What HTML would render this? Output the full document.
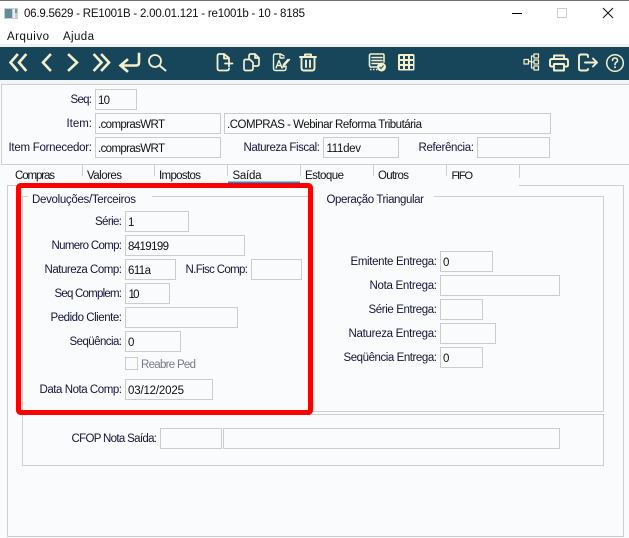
<!DOCTYPE html>
<html>
<head>
<meta charset="utf-8">
<style>
html,body{margin:0;padding:0;background:#fff;width:629px;height:538px;overflow:hidden}
svg{display:block}
text{font-family:"Liberation Sans",sans-serif;font-size:11.5px;fill:#15153a}
.v{fill:#111}
.b{fill:none;stroke:#cfcfcf;stroke-width:1}
.i{fill:#fafbfd;stroke:#cccccc;stroke-width:1}
.t{fill:#111}
.ic{fill:none;stroke:#f5f0cb;stroke-width:1.7;stroke-linecap:round;stroke-linejoin:round}
.ch{fill:none;stroke:#f5f0cb;stroke-width:2.6;stroke-linecap:square;stroke-linejoin:miter}
</style>
</head>
<body>
<svg width="629" height="538" viewBox="0 0 629 538" xmlns="http://www.w3.org/2000/svg">
<!-- window chrome -->
<rect width="629" height="538" fill="#fff"/>
<rect width="629" height="1" fill="#6f6f6f"/>
<rect x="4" y="8" width="14" height="11" fill="#c9ccd0"/>
<rect x="5" y="9" width="7" height="9" fill="#5f8f9a"/>
<rect x="13" y="9" width="2" height="9" fill="#e8ecee"/>
<rect x="15" y="9" width="2" height="4" fill="#7a9aa8"/>
<text x="24" y="17" textLength="281" lengthAdjust="spacing" style="fill:#111">06.9.5629 - RE1001B - 2.00.01.121 - re1001b - 10 - 8185</text>
<rect x="512" y="13" width="10" height="1" fill="#000"/>
<rect x="557.5" y="8.5" width="9" height="9" fill="none" stroke="#cfcfcf"/>
<path d="M603 8L613 18M613 8L603 18" stroke="#111" stroke-width="1" fill="none"/>
<text x="7" y="40" textLength="42" lengthAdjust="spacing" style="fill:#111">Arquivo</text>
<text x="63" y="40" textLength="31" lengthAdjust="spacing" style="fill:#111">Ajuda</text>
<rect y="44" width="629" height="3" fill="#f0f0f0"/>
<!-- toolbar -->
<rect y="47" width="629" height="33" fill="#17465b"/>
<rect y="80" width="629" height="4" fill="#f4f4f4"/>
<path class="ch" d="M17 55L10.5 62.5L17 70M25.5 55L19 62.5L25.5 70"/>
<path class="ch" d="M50 55L43 62.5L50 70"/>
<path class="ch" d="M69 55L77 62.5L69 70"/>
<path class="ch" d="M94.500 55L101.500 62.500L94.500 70M102 55L109 62.500L102 70"/>
<path class="ch" d="M139 54V62.500Q139 65.500 136 65.500H122M127 60L120.500 65.500L127 71"/>
<circle class="ic" cx="155" cy="61" r="6" style="stroke-width:1.8"/>
<path class="ic" d="M159.500 65.500L165.500 70.500" style="stroke-width:2"/>
<!-- new doc -->
<path class="ic" d="M229 60V58L224 54H219.500Q217.500 54 217.500 56V68Q217.500 70.500 219.500 70.500H226.500Q229 70.500 229 68.500M224 54V58.500H229M225 63.500H232.500M229 60.500V66.500" style="stroke-width:1.8"/>
<!-- copy -->
<path class="ic" d="M250 59.500H245.500Q244 59.500 244 61.500V68.500Q244 70.500 245.500 70.500H251Q253 70.500 253 68.500V62.500ZM249 59V56Q249 54 251 54H255L259 58V64Q259 66 257 66H253.500M255 54V58H259" style="stroke-width:1.7"/>
<!-- edit doc -->
<path class="ic" d="M284 56L280.500 54H275.500Q273.500 54 273.500 56V68.500Q273.500 70.500 275.500 70.500H284Q286 70.500 286 68.500V66M280 54V58H284M276 68L279 60.500L282 68M277 65.500H281M283.500 66L289.500 59.500M285.500 66.500L283 67L283.500 64.500L288 59.500" style="stroke-width:1.4"/>
<!-- trash -->
<path class="ic" d="M300 57H316M305 57V54.500H311V57M301.500 57V68Q301.500 70.500 304 70.500H312Q314.500 70.500 314.500 68V57M306 60.500V67M310 60.500V67" style="stroke-width:1.9"/>
<!-- report -->
<path class="ic" d="M382 67H371Q369.500 67 369.500 65V55.500Q369.500 54 371 54H383Q384 54 384 55.500V62M372 57.500H382M372 60.500H382M372 63.500H379" style="stroke-width:1.6"/>
<path d="M370 69.500H378" stroke="#f5f0cb" stroke-width="1.500" stroke-dasharray="1.500 1.500"/>
<circle cx="381.500" cy="67" r="4.500" fill="#f5f0cb"/>
<path d="M379.500 67L381 68.500L383.500 65.500" stroke="#17465b" stroke-width="1" fill="none"/>
<!-- grid -->
<rect x="398" y="54" width="16.500" height="16.500" rx="1.500" fill="#f5f0cb"/>
<g fill="#17465b">
<rect x="400" y="56" width="3" height="3"/><rect x="405" y="56" width="3" height="3"/><rect x="410" y="56" width="3" height="3"/>
<rect x="400" y="61" width="3" height="3"/><rect x="405" y="61" width="3" height="3"/><rect x="410" y="61" width="3" height="3"/>
<rect x="400" y="66" width="3" height="3"/><rect x="405" y="66" width="3" height="3"/><rect x="410" y="66" width="3" height="3"/>
</g>
<!-- tree -->
<g class="ic" style="stroke-width:1.2">
<rect x="524" y="59.500" width="4.500" height="4.500"/>
<rect x="534" y="54" width="4.500" height="4"/>
<rect x="534" y="60" width="4.500" height="4"/>
<rect x="534" y="66" width="4.500" height="4"/>
<path d="M528.500 61.500H531.500M531.500 56H534M531.500 56V68H534M531.500 62H534"/>
</g>
<!-- printer -->
<path class="ic" d="M554 59V55.500H564V59M553.500 66.500H551.500Q550 66.500 550 65V61Q550 59 552 59H566Q568 59 568 61V65Q568 66.500 566.500 66.500H564.500M554 64H564V70.500H554Z" style="stroke-width:1.900"/>
<!-- exit -->
<path class="ic" d="M588 57V56Q588 54.500 586 54.500H581Q579 54.500 579 56.500V68.500Q579 70.500 581 70.500H586Q588 70.500 588 69M585 62.500H597M593 58.500L597 62.500L593 66.500" style="stroke-width:1.900"/>
<!-- help -->
<circle class="ic" cx="615" cy="63" r="8.300" style="stroke-width:1.500"/>
<path class="ic" d="M612.500 60.500Q612.500 58 615 58Q617.500 58 617.500 60.500Q617.500 61.800 615.800 62.700Q615 63.200 615 64.800" style="stroke-width:1.500"/>
<circle cx="615" cy="67.300" r="1" fill="#f5f0cb"/>

<!-- body -->
<rect x="0" y="84" width="629" height="454" fill="#fafbfd"/>
<path class="b" d="M629 84.500H1.500V164.500H629"/>
<!-- tabs -->
<rect x="8" y="165" width="511" height="21" fill="#fafbfd"/>
<path class="b" d="M82.500 164V176M154.500 164V176M227.500 164V176M300.500 164V176M373.500 164V176M446.500 164V176M519.500 164V178"/>
<rect x="228" y="181.500" width="72" height="1.500" fill="#1295dc"/>
<text class="t" x="15" y="179" textLength="40" lengthAdjust="spacing">Compras</text>
<text class="t" x="87" y="179" textLength="35" lengthAdjust="spacing">Valores</text>
<text class="t" x="159" y="179" textLength="42" lengthAdjust="spacing">Impostos</text>
<text class="t" x="232.500" y="179" textLength="29" lengthAdjust="spacing">Saída</text>
<text class="t" x="305" y="179" textLength="39" lengthAdjust="spacing">Estoque</text>
<text class="t" x="378" y="179" textLength="31" lengthAdjust="spacing">Outros</text>
<text class="t" x="451.500" y="179" textLength="21.500" lengthAdjust="spacing" style="font-size:11px">FIFO</text>
<path class="b" d="M519 185.500H623.500V536.500H7.500V185.500H17"/>
<!-- groups -->
<path class="b" d="M28 196.500H22.500V412M152 196.500H309"/>
<path class="b" d="M434 196.500H603.500V411.500H313"/>
<rect class="b" x="22.500" y="414.500" width="581" height="51"/>
<text x="32" y="203" textLength="104" lengthAdjust="spacing">Devoluções/Terceiros</text>
<text x="326.500" y="203" textLength="97.500" lengthAdjust="spacing">Operação Triangular</text>

<!-- header fields -->
<text x="70.500" y="103" textLength="21.500" lengthAdjust="spacing">Seq:</text>
<rect class="i" x="95.500" y="89.500" width="41" height="20"/>
<text class="v" x="98" y="104" textLength="12" lengthAdjust="spacing">10</text>
<text x="66.500" y="127" textLength="25.500" lengthAdjust="spacing">Item:</text>
<rect class="i" x="95.500" y="113.500" width="125" height="20"/>
<text class="v" x="98" y="128" textLength="67" lengthAdjust="spacing">.comprasWRT</text>
<rect class="i" x="224.500" y="113.500" width="326" height="20"/>
<text class="v" x="227" y="128" textLength="195" lengthAdjust="spacing">.COMPRAS - Webinar Reforma Tributária</text>
<text x="8.500" y="151" textLength="83.500" lengthAdjust="spacing">Item Fornecedor:</text>
<rect class="i" x="95.500" y="137.500" width="125" height="20"/>
<text class="v" x="98" y="152" textLength="67" lengthAdjust="spacing">.comprasWRT</text>
<text x="243.500" y="151" textLength="76.500" lengthAdjust="spacing">Natureza Fiscal:</text>
<rect class="i" x="323.500" y="137.500" width="75" height="20"/>
<text class="v" x="326.500" y="152" textLength="34.500" lengthAdjust="spacing">111dev</text>
<text x="418.500" y="151" textLength="55.500" lengthAdjust="spacing">Referência:</text>
<rect class="i" x="477.500" y="137.500" width="72" height="20"/>

<!-- left fields -->
<text x="95" y="225" textLength="27" lengthAdjust="spacing">Série:</text>
<rect class="i" x="125.500" y="211.500" width="63" height="20"/>
<text class="v" x="128" y="226" textLength="5" lengthAdjust="spacing">1</text>
<text x="51.500" y="249" textLength="70.500" lengthAdjust="spacing">Numero Comp:</text>
<rect class="i" x="125.500" y="235.500" width="119" height="20"/>
<text class="v" x="128" y="250" textLength="41" lengthAdjust="spacing">8419199</text>
<text x="44.500" y="273" textLength="77.500" lengthAdjust="spacing">Natureza Comp:</text>
<rect class="i" x="125.500" y="259.500" width="50" height="20"/>
<text class="v" x="128" y="274" textLength="23" lengthAdjust="spacing">611a</text>
<text x="185.500" y="273" textLength="62.500" lengthAdjust="spacing">N.Fisc Comp:</text>
<rect class="i" x="251.500" y="259.500" width="50" height="20"/>
<text x="54.500" y="297" textLength="67.500" lengthAdjust="spacing">Seq Complem:</text>
<rect class="i" x="125.500" y="283.500" width="44" height="20"/>
<text class="v" x="128.500" y="298" textLength="11" lengthAdjust="spacing">10</text>
<text x="50.500" y="321" textLength="71.500" lengthAdjust="spacing">Pedido Cliente:</text>
<rect class="i" x="125.500" y="307.500" width="112" height="20"/>
<text x="69.500" y="345" textLength="52.500" lengthAdjust="spacing">Seqüência:</text>
<rect class="i" x="125.500" y="331.500" width="55" height="20"/>
<text class="v" x="128" y="346" textLength="5.500" lengthAdjust="spacing">0</text>
<rect class="i" x="125.500" y="357.500" width="12" height="12"/>
<text x="141" y="368" textLength="55" lengthAdjust="spacing" style="fill:#7a7a86">Reabre Ped</text>
<text x="39.500" y="393" textLength="82.500" lengthAdjust="spacing">Data Nota Comp:</text>
<rect class="i" x="125.500" y="379.500" width="87" height="20"/>
<text class="v" x="128" y="394" textLength="56" lengthAdjust="spacing">03/12/2025</text>

<!-- right fields -->
<text x="350.500" y="265" textLength="86.500" lengthAdjust="spacing">Emitente Entrega:</text>
<rect class="i" x="440.500" y="251.500" width="52" height="20"/>
<text class="v" x="443" y="266" textLength="5.500" lengthAdjust="spacing">0</text>
<text x="369.500" y="289" textLength="67.500" lengthAdjust="spacing">Nota Entrega:</text>
<rect class="i" x="440.500" y="275.500" width="119" height="20"/>
<text x="368.500" y="313" textLength="68.500" lengthAdjust="spacing">Série Entrega:</text>
<rect class="i" x="440.500" y="299.500" width="42" height="20"/>
<text x="348.500" y="337" textLength="88.500" lengthAdjust="spacing">Natureza Entrega:</text>
<rect class="i" x="440.500" y="323.500" width="55" height="20"/>
<text x="343.500" y="361" textLength="93.500" lengthAdjust="spacing">Seqüência Entrega:</text>
<rect class="i" x="440.500" y="347.500" width="42" height="20"/>
<text class="v" x="443" y="362" textLength="5.500" lengthAdjust="spacing">0</text>

<!-- CFOP -->
<text x="71.500" y="442" textLength="85.500" lengthAdjust="spacing">CFOP Nota Saída:</text>
<rect class="i" x="160.500" y="428.500" width="61" height="20"/>
<rect class="i" x="223.500" y="428.500" width="336" height="20"/>

<!-- red highlight -->
<rect x="18.500" y="185.500" width="292" height="227" rx="2" fill="none" stroke="#ff0000" stroke-width="5"/>
</svg>
</body>
</html>
